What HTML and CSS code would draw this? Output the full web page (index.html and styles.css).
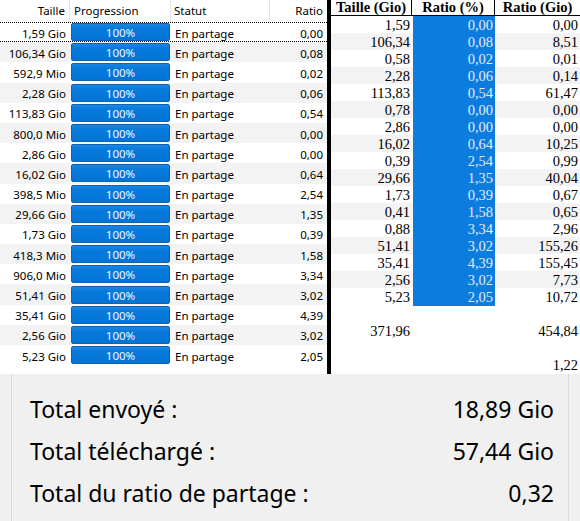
FILE: index.html
```html
<!DOCTYPE html>
<html lang="fr">
<head>
<meta charset="utf-8">
<title>Ratio</title>
<link rel="stylesheet" href="styles.css">
</head>
<body>
<div class="top">
  <div class="list">
    <div class="lrow lhead">
      <div class="c c-size">Taille</div>
      <div class="c c-prog">Progression</div>
      <div class="c c-stat">Statut</div>
      <div class="c c-ratio">Ratio</div>
    </div>
    <div class="lrow focus"><div class="c c-size">1,59 Gio</div><div class="c c-prog"><div class="bar">100%</div></div><div class="c c-stat">En partage</div><div class="c c-ratio">0,00</div></div>
    <div class="lrow alt"><div class="c c-size">106,34 Gio</div><div class="c c-prog"><div class="bar">100%</div></div><div class="c c-stat">En partage</div><div class="c c-ratio">0,08</div></div>
    <div class="lrow"><div class="c c-size">592,9 Mio</div><div class="c c-prog"><div class="bar">100%</div></div><div class="c c-stat">En partage</div><div class="c c-ratio">0,02</div></div>
    <div class="lrow alt"><div class="c c-size">2,28 Gio</div><div class="c c-prog"><div class="bar">100%</div></div><div class="c c-stat">En partage</div><div class="c c-ratio">0,06</div></div>
    <div class="lrow"><div class="c c-size">113,83 Gio</div><div class="c c-prog"><div class="bar">100%</div></div><div class="c c-stat">En partage</div><div class="c c-ratio">0,54</div></div>
    <div class="lrow alt"><div class="c c-size">800,0 Mio</div><div class="c c-prog"><div class="bar">100%</div></div><div class="c c-stat">En partage</div><div class="c c-ratio">0,00</div></div>
    <div class="lrow"><div class="c c-size">2,86 Gio</div><div class="c c-prog"><div class="bar">100%</div></div><div class="c c-stat">En partage</div><div class="c c-ratio">0,00</div></div>
    <div class="lrow alt"><div class="c c-size">16,02 Gio</div><div class="c c-prog"><div class="bar">100%</div></div><div class="c c-stat">En partage</div><div class="c c-ratio">0,64</div></div>
    <div class="lrow"><div class="c c-size">398,5 Mio</div><div class="c c-prog"><div class="bar">100%</div></div><div class="c c-stat">En partage</div><div class="c c-ratio">2,54</div></div>
    <div class="lrow alt"><div class="c c-size">29,66 Gio</div><div class="c c-prog"><div class="bar">100%</div></div><div class="c c-stat">En partage</div><div class="c c-ratio">1,35</div></div>
    <div class="lrow"><div class="c c-size">1,73 Gio</div><div class="c c-prog"><div class="bar">100%</div></div><div class="c c-stat">En partage</div><div class="c c-ratio">0,39</div></div>
    <div class="lrow alt"><div class="c c-size">418,3 Mio</div><div class="c c-prog"><div class="bar">100%</div></div><div class="c c-stat">En partage</div><div class="c c-ratio">1,58</div></div>
    <div class="lrow"><div class="c c-size">906,0 Mio</div><div class="c c-prog"><div class="bar">100%</div></div><div class="c c-stat">En partage</div><div class="c c-ratio">3,34</div></div>
    <div class="lrow alt"><div class="c c-size">51,41 Gio</div><div class="c c-prog"><div class="bar">100%</div></div><div class="c c-stat">En partage</div><div class="c c-ratio">3,02</div></div>
    <div class="lrow"><div class="c c-size">35,41 Gio</div><div class="c c-prog"><div class="bar">100%</div></div><div class="c c-stat">En partage</div><div class="c c-ratio">4,39</div></div>
    <div class="lrow alt"><div class="c c-size">2,56 Gio</div><div class="c c-prog"><div class="bar">100%</div></div><div class="c c-stat">En partage</div><div class="c c-ratio">3,02</div></div>
    <div class="lrow"><div class="c c-size">5,23 Gio</div><div class="c c-prog"><div class="bar">100%</div></div><div class="c c-stat">En partage</div><div class="c c-ratio">2,05</div></div>
  </div>
  <div class="divider"></div>
  <div class="sheet">
    <div class="srow shead"><div class="s">Taille (Gio)</div><div class="s">Ratio (%)</div><div class="s">Ratio (Gio)</div></div>
    <div class="srow"><div class="s">1,59</div><div class="s sel">0,00</div><div class="s">0,00</div></div>
    <div class="srow alt"><div class="s">106,34</div><div class="s sel">0,08</div><div class="s">8,51</div></div>
    <div class="srow"><div class="s">0,58</div><div class="s sel">0,02</div><div class="s">0,01</div></div>
    <div class="srow alt"><div class="s">2,28</div><div class="s sel">0,06</div><div class="s">0,14</div></div>
    <div class="srow"><div class="s">113,83</div><div class="s sel">0,54</div><div class="s">61,47</div></div>
    <div class="srow alt"><div class="s">0,78</div><div class="s sel">0,00</div><div class="s">0,00</div></div>
    <div class="srow"><div class="s">2,86</div><div class="s sel">0,00</div><div class="s">0,00</div></div>
    <div class="srow alt"><div class="s">16,02</div><div class="s sel">0,64</div><div class="s">10,25</div></div>
    <div class="srow"><div class="s">0,39</div><div class="s sel">2,54</div><div class="s">0,99</div></div>
    <div class="srow alt"><div class="s">29,66</div><div class="s sel">1,35</div><div class="s">40,04</div></div>
    <div class="srow"><div class="s">1,73</div><div class="s sel">0,39</div><div class="s">0,67</div></div>
    <div class="srow alt"><div class="s">0,41</div><div class="s sel">1,58</div><div class="s">0,65</div></div>
    <div class="srow"><div class="s">0,88</div><div class="s sel">3,34</div><div class="s">2,96</div></div>
    <div class="srow alt"><div class="s">51,41</div><div class="s sel">3,02</div><div class="s">155,26</div></div>
    <div class="srow"><div class="s">35,41</div><div class="s sel">4,39</div><div class="s">155,45</div></div>
    <div class="srow alt"><div class="s">2,56</div><div class="s sel">3,02</div><div class="s">7,73</div></div>
    <div class="srow"><div class="s">5,23</div><div class="s sel">2,05</div><div class="s">10,72</div></div>
    <div class="srow"><div class="s"></div><div class="s"></div><div class="s"></div></div>
    <div class="srow"><div class="s">371,96</div><div class="s"></div><div class="s">454,84</div></div>
    <div class="srow"><div class="s"></div><div class="s"></div><div class="s"></div></div>
    <div class="srow"><div class="s"></div><div class="s"></div><div class="s">1,22</div></div>
  </div>
</div>
<div class="stats">
  <div class="group">
    <div class="stat"><span>Total envoyé :</span><span>18,89 Gio</span></div>
    <div class="stat"><span>Total téléchargé :</span><span>57,44 Gio</span></div>
    <div class="stat"><span>Total du ratio de partage :</span><span>0,32</span></div>
  </div>
</div>
</body>
</html>
```

FILE: styles.css
```css
* { box-sizing: border-box; }
html, body { margin: 0; padding: 0; }
body {
  width: 580px;
  height: 521px;
  overflow: hidden;
  background: #f0f0f0;
  font-family: "Noto Sans", "Open Sans", sans-serif;
  color: #000;
}
.top {
  display: flex;
  height: 374px;
  background: #fff;
}
.list {
  width: 327px;
  flex: none;
  font-size: 11.5px;
}
.lrow {
  display: grid;
  grid-template-columns: 70px 101px 99px 57px;
  height: 20.2px;
  align-items: center;
}
.lrow.alt { background: #f3f3f3; }
.lrow.lhead {
  height: 22px;
  align-items: stretch;
  background: #fff;
}
.lhead .c {
  border-right: 1px solid #e5e5e5;
  display: flex;
  align-items: center;
  padding-bottom: 1px;
}
.lhead .c-size { justify-content: flex-end; padding-right: 4px; }
.lhead .c-prog { padding-left: 4px; }
.lhead .c-stat { padding-left: 3px; }
.lhead .c-ratio { justify-content: flex-end; padding-right: 4px; border-right: none; }
.lrow.focus {
  border-top: 1px dotted #000;
  border-bottom: 1px dotted #000;
}
.c { white-space: nowrap; overflow: hidden; padding-top: 2px; }
.lhead .c { padding-top: 0; }
.c-size { text-align: right; padding-right: 4px; }
.c-stat { padding-left: 4px; }
.c-ratio { text-align: right; padding-right: 4px; }
.c-prog { padding-left: 1px; padding-top: 0; height: 100%; display: flex; align-items: center; }
.bar {
  width: 99px;
  height: 18px;
  border: 1px solid #1163b0;
  border-radius: 2px;
  background: linear-gradient(#1a86e3 0, #0679db 30%, #0274d6 100%);
  color: #f4f8ff;
  text-align: center;
  line-height: 17px;
  font-size: 11.5px;
}
.divider {
  width: 4px;
  flex: none;
  background: #000;
}
.sheet {
  flex: 1;
  font-family: "Liberation Serif", "Times New Roman", serif;
  font-size: 14.5px;
}
.srow {
  display: grid;
  grid-template-columns: 81px 83px 85px;
  height: 17px;
  line-height: 18px;
}
.srow.alt { background: #f3f3f3; }
.shead {
  height: 16px;
  line-height: 15px;
  border-bottom: 1px solid #000;
  font-weight: bold;
  background: #fff;
}
.shead .s {
  text-align: center;
  padding-right: 0;
  border-right: 1px solid #000;
}
.shead .s:last-child { border-right: none; }
.s {
  text-align: right;
  padding-right: 2px;
  white-space: nowrap;
}
.s.sel {
  background: #0c7ddf;
  color: #e4ebf3;
  margin-left: 1px;
}
.stats {
  height: 147px;
  padding: 0 11px 0 11px;
}
.group {
  height: 100%;
  border-left: 1px solid #dadada;
  border-right: 1px solid #dadada;
  padding: 21px 14px 0 18px;
  display: flex;
  flex-direction: column;
  gap: 14px;
  font-size: 23px;
  color: #000;
}
.stat {
  display: flex;
  justify-content: space-between;
  height: 28px;
  line-height: 28px;
}
```
